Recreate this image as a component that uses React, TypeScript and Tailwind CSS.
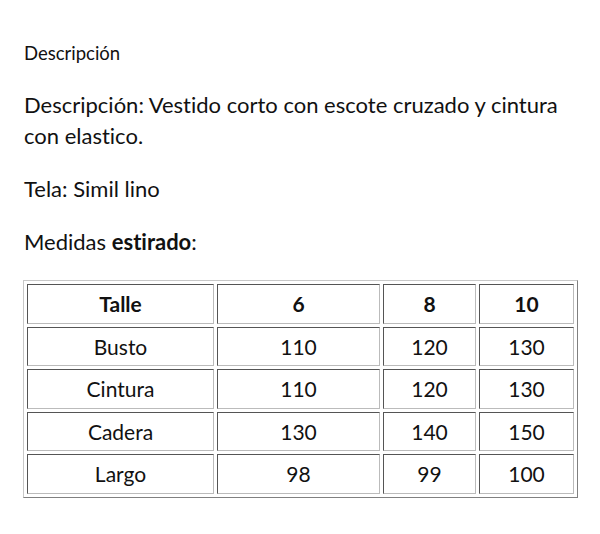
const rows = [
  ["Busto", "110", "120", "130"],
  ["Cintura", "110", "120", "130"],
  ["Cadera", "130", "140", "150"],
  ["Largo", "98", "99", "100"],
];

export default function App() {
  return (
    <div className="w-[600px] h-[534px] bg-white text-[#111] px-6 pt-[40px] font-['Lato',sans-serif] [font-variant-ligatures:none]">
      <h3 className="text-[18.5px] leading-[26px]">Descripción</h3>
      <p className="mt-[23px] text-[22px] leading-[31px]">
        Descripción: Vestido corto con escote cruzado y cintura con elastico.
      </p>
      <p className="mt-[22px] text-[22px] leading-[31px]">Tela: Simil lino</p>
      <p className="mt-[22px] text-[22px] leading-[31px]">
        Medidas <strong className="font-bold">estirado</strong>:
      </p>
      <table className="mt-[23px] w-[555px] -ml-px border-separate border-spacing-[3px] border border-t-[#c8c8c8] border-l-[#c8c8c8] border-r-[#808080] border-b-[#808080] text-[21px] text-center">
        <thead>
          <tr>
            {["Talle", "6", "8", "10"].map((h, i) => (
              <th
                key={h}
                className={`h-[39.5px] font-bold border border-t-[#555] border-l-[#555] border-r-[#bbb] border-b-[#bbb] ${
                  i === 0 ? "w-[187px]" : i === 1 ? "w-[163px]" : i === 2 ? "w-[93px]" : "w-[95px]"
                }`}
              >
                {h}
              </th>
            ))}
          </tr>
        </thead>
        <tbody>
          {rows.map((r) => (
            <tr key={r[0]}>
              {r.map((c, i) => (
                <td
                  key={i}
                  className="h-[39.5px] border border-t-[#555] border-l-[#555] border-r-[#bbb] border-b-[#bbb]"
                >
                  {c}
                </td>
              ))}
            </tr>
          ))}
        </tbody>
      </table>
    </div>
  );
}
